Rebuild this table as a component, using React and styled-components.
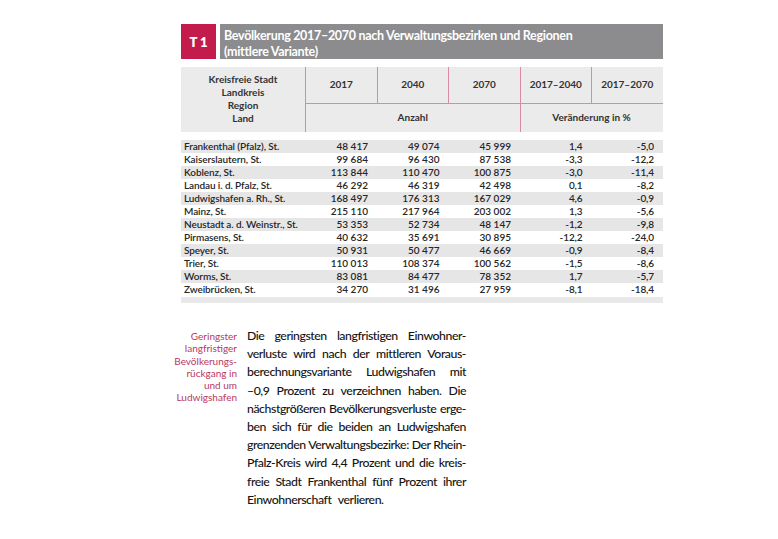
import React from 'react';
import styled, { createGlobalStyle } from 'styled-components';

const Global = createGlobalStyle`
  html, body { margin: 0; padding: 0; background: #fff; }
  body { font-family: Lato, "Liberation Sans", sans-serif; }
  * { box-sizing: border-box; }
`;

const FONT = `Lato, "Liberation Sans", sans-serif`;
const PINK = '#d98ba1';

const Page = styled.div`
  width: 778px;
  height: 539px;
  overflow: hidden;
  background: #fff;
  padding: 24px 0 0 181px;
  display: flex;
  flex-direction: column;
`;

const TitleRow = styled.div`
  display: flex;
  gap: 4px;
  height: 35px;
  width: 481.5px;
`;

const Badge = styled.div`
  width: 35px;
  background: #c21b4c;
  color: #fff;
  font-family: ${FONT};
  font-weight: 800;
  font-size: 13px;
  display: flex;
  align-items: center;
  justify-content: center;
`;

const TitleBar = styled.div`
  flex: 1;
  background: #8c8c8e;
  color: #fff;
  font-family: ${FONT};
  font-weight: 700;
  font-size: 12.5px;
  letter-spacing: -0.3px;
  line-height: 16px;
  padding: 4px 0 0 4px;
`;

const HeaderGrid = styled.div`
  margin-top: 7.5px;
  width: 481.5px;
  display: grid;
  grid-template-columns: 124px repeat(5, 71.5px);
  grid-template-rows: 36px 29px;
  background: #ebebeb;
  font-family: ${FONT};
  font-weight: 700;
  font-size: 10px;
  color: #333;
`;

const HeadCell = styled.div`
  display: flex;
  align-items: center;
  justify-content: center;
  text-align: center;
  grid-column: ${p => p.$col};
  grid-row: ${p => p.$row};
  border-left: ${p => (p.$left ? `1px solid ${PINK}` : 'none')};
  border-top: ${p => (p.$top ? `1px solid ${PINK}` : 'none')};
  line-height: 13px;
`;

const Body = styled.div`
  margin-top: 8px;
  width: 481.5px;
  display: flex;
  flex-direction: column;
`;

const Row = styled.div`
  display: grid;
  grid-template-columns: 124px repeat(5, 71.5px);
  height: 13px;
  align-items: center;
  background: ${p => (p.$alt ? '#e6e6e7' : '#fff')};
  font-family: ${FONT};
  font-weight: 600;
  font-size: 10px;
  letter-spacing: -0.1px;
  color: #262626;
  white-space: nowrap;
`;

const NameCell = styled.div`
  padding-left: 3px;
`;

const NumCell = styled.div`
  text-align: right;
  padding-right: 8.5px;
`;

const Strip = styled.div`
  height: 6px;
  background: #e9e9ea;
  margin-top: 1px;
`;

const TextSection = styled.div`
  display: flex;
  gap: 10px;
  margin-top: 24.5px;
`;

const Sidebar = styled.div`
  width: 56px;
  padding-top: 3px;
  text-align: right;
  color: #b8385f;
  font-family: ${FONT};
  font-size: 10px;
  line-height: 12.3px;
  white-space: nowrap;
  display: flex;
  flex-direction: column;
  align-items: flex-end;
`;

const Prose = styled.div`
  width: 219px;
  color: #141414;
  font-family: ${FONT};
  font-weight: 500;
  font-size: 12.3px;
  letter-spacing: -0.45px;
  line-height: 18.2px;
`;

const Line = styled.div`
  text-align: ${p => (p.$last ? 'left' : 'justify')};
  text-align-last: ${p => (p.$last ? 'left' : 'justify')};
  word-spacing: ${p => (p.$last ? '4px' : 'normal')};
`;

const T = '\u202F';
const rows = [
  ['Frankenthal (Pfalz), St.', `48${T}417`, `49${T}074`, `45${T}999`, '1,4', '-5,0'],
  ['Kaiserslautern, St.', `99${T}684`, `96${T}430`, `87${T}538`, '-3,3', '-12,2'],
  ['Koblenz, St.', `113${T}844`, `110${T}470`, `100${T}875`, '-3,0', '-11,4'],
  ['Landau i. d. Pfalz, St.', `46${T}292`, `46${T}319`, `42${T}498`, '0,1', '-8,2'],
  ['Ludwigshafen a. Rh., St.', `168${T}497`, `176${T}313`, `167${T}029`, '4,6', '-0,9'],
  ['Mainz, St.', `215${T}110`, `217${T}964`, `203${T}002`, '1,3', '-5,6'],
  ['Neustadt a. d. Weinstr., St.', `53${T}353`, `52${T}734`, `48${T}147`, '-1,2', '-9,8'],
  ['Pirmasens, St.', `40${T}632`, `35${T}691`, `30${T}895`, '-12,2', '-24,0'],
  ['Speyer, St.', `50${T}931`, `50${T}477`, `46${T}669`, '-0,9', '-8,4'],
  ['Trier, St.', `110${T}013`, `108${T}374`, `100${T}562`, '-1,5', '-8,6'],
  ['Worms, St.', `83${T}081`, `84${T}477`, `78${T}352`, '1,7', '-5,7'],
  ['Zweibrücken, St.', `34${T}270`, `31${T}496`, `27${T}959`, '-8,1', '-18,4'],
];

const prose = [
  'Die geringsten langfristigen Einwohner-',
  'verluste wird nach der mittleren Voraus-',
  'berechnungsvariante Ludwigshafen mit',
  '–0,9 Prozent zu verzeichnen haben. Die',
  'nächstgrößeren Bevölkerungsverluste erge-',
  'ben sich für die beiden an Ludwigshafen',
  'grenzenden Verwaltungsbezirke: Der Rhein-',
  'Pfalz-Kreis wird 4,4 Prozent und die kreis-',
  'freie Stadt Frankenthal fünf Prozent ihrer',
  'Einwohnerschaft verlieren.',
];

const side = ['Geringster', 'langfristiger', 'Bevölkerungs-', 'rückgang in', 'und um', 'Ludwigshafen'];

export default function App() {
  return (
    <>
      <Global />
      <Page>
        <TitleRow>
          <Badge>T 1</Badge>
          <TitleBar>
            Bevölkerung 2017–2070 nach Verwaltungsbezirken und Regionen
            <br />
            (mittlere Variante)
          </TitleBar>
        </TitleRow>
        <HeaderGrid>
          <HeadCell $col="1" $row="1 / span 2">
            Kreisfreie Stadt<br />Landkreis<br />Region<br />Land
          </HeadCell>
          <HeadCell $col="2" $row="1" $left>2017</HeadCell>
          <HeadCell $col="3" $row="1" $left>2040</HeadCell>
          <HeadCell $col="4" $row="1" $left>2070</HeadCell>
          <HeadCell $col="5" $row="1" $left>2017–2040</HeadCell>
          <HeadCell $col="6" $row="1" $left>2017–2070</HeadCell>
          <HeadCell $col="2 / span 3" $row="2" $left $top>Anzahl</HeadCell>
          <HeadCell $col="5 / span 2" $row="2" $left $top>Veränderung in %</HeadCell>
        </HeaderGrid>
        <Body>
          {rows.map((r, i) => (
            <Row key={r[0]} $alt={i % 2 === 0}>
              <NameCell>{r[0]}</NameCell>
              {r.slice(1).map((v, j) => (
                <NumCell key={j}>{v}</NumCell>
              ))}
            </Row>
          ))}
          <Strip />
        </Body>
        <TextSection>
          <Sidebar>
            {side.map(s => (
              <span key={s}>{s}</span>
            ))}
          </Sidebar>
          <Prose>
            {prose.map((l, i) => (
              <Line key={i} $last={i === prose.length - 1}>{l}</Line>
            ))}
          </Prose>
        </TextSection>
      </Page>
    </>
  );
}
